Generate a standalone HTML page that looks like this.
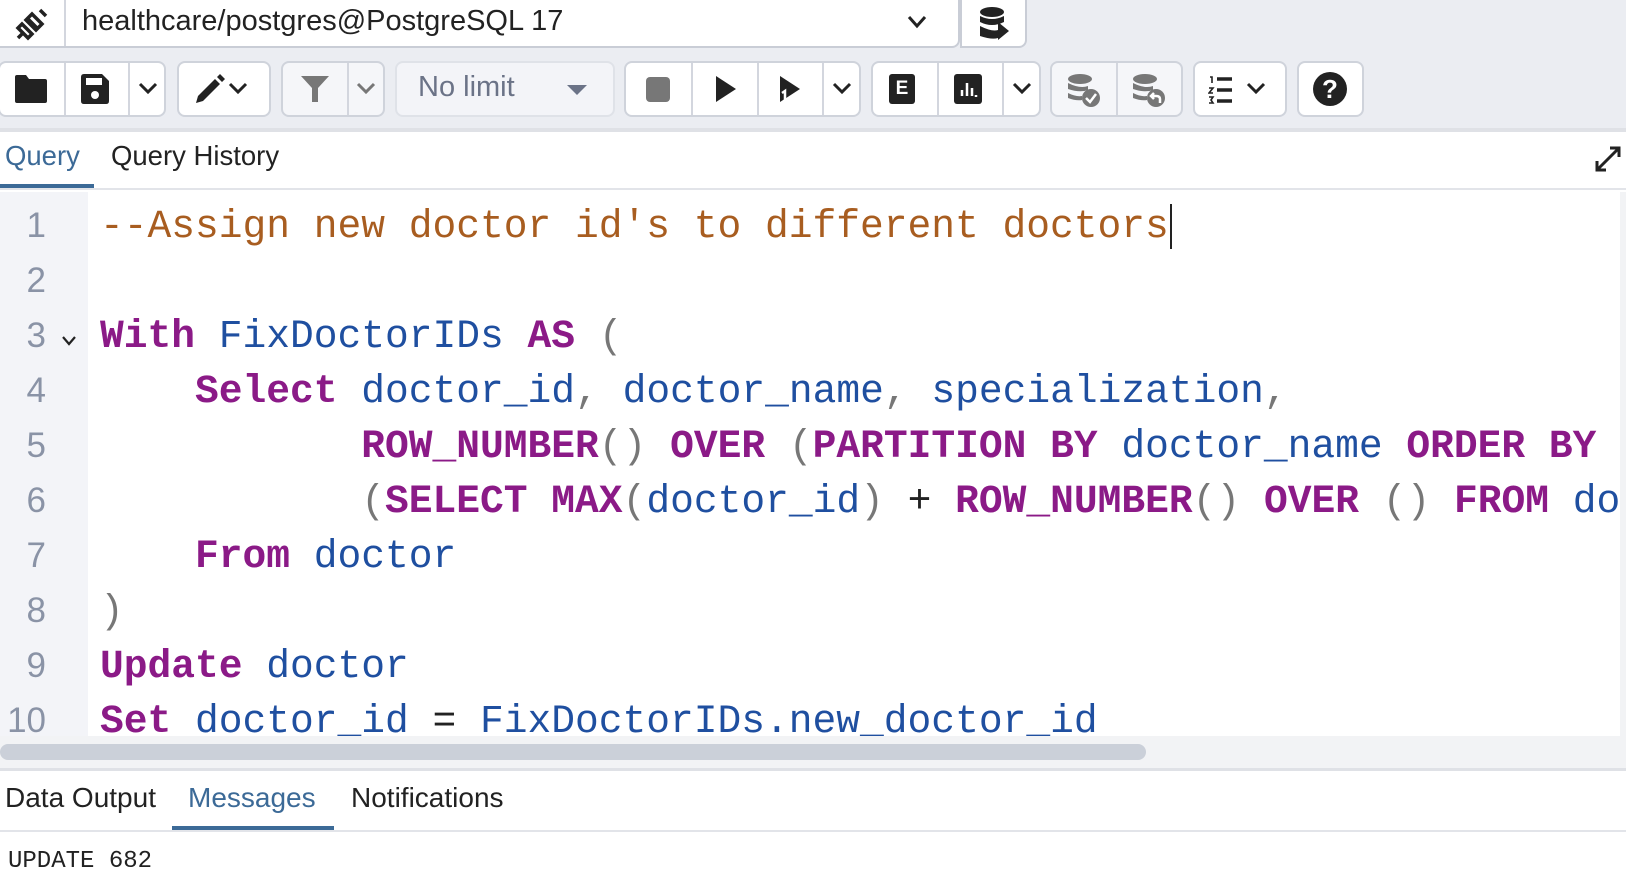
<!DOCTYPE html>
<html><head><meta charset="utf-8"><style>
*{box-sizing:border-box;margin:0;padding:0}
body{width:1626px;height:893px;overflow:hidden;background:#fff;font-family:"Liberation Sans",sans-serif;position:relative}
.abs{position:absolute}
.top{left:0;top:0;width:1626px;height:128px;background:#ebedf2}
.conn{left:-2px;top:-2px;width:962px;height:50px;background:#fff;border:2px solid #c9cdd6;border-radius:0 0 8px 0}
.grp{top:61px;height:56px;background:#fff;border:2px solid #cfd3db;border-radius:8px}
.grp.dis{background:#f5f6f9}
.sep{top:0;width:2px;height:100%;background:#d3d6de}
svg{position:absolute}
.code{left:0;top:192px;width:1620px;height:544px;overflow:hidden;background:#fff}
.gut{left:0;top:0;width:88px;height:544px;background:#f3f4f8}
.ln{position:absolute;left:0;width:46px;text-align:right;font:35px "Liberation Sans",sans-serif;color:#8a93a6}
.cl{position:absolute;left:100px;white-space:pre;font:39.6px "Liberation Mono","DejaVu Sans Mono",monospace;color:#1f4fa0;line-height:55px}
.k{color:#8b1a87;font-weight:bold}
.c{color:#a85d20}
.p{color:#777}
.o{color:#222}
</style></head><body>
<div class="abs top"></div>
<div class="abs conn"></div>
<div class="abs" style="left:64px;top:0;width:2px;height:46px;background:#d3d6de"></div>
<svg style="left:14px;top:6px" width="36" height="36" viewBox="0 0 36 36" fill="none" stroke="#222" stroke-width="3.5"><path d="M4 32 L10 26 M26 4 L32 10 M13 12 L24 23 M18 8 L28 18 L22 24 L12 14 Z M8 18 L18 28 L14 32 L4 22 Z"/></svg>
<div class="abs" style="left:82px;top:5px;font-size:29px;color:#222">healthcare/postgres@PostgreSQL 17</div>
<svg style="left:906px;top:14px" width="22" height="16" viewBox="0 0 22 16"><path d="M3 3 L11 12 L19 3" stroke="#222" stroke-width="3" fill="none"/></svg>
<div class="abs" style="left:960px;top:-2px;width:67px;height:50px;background:#fff;border:2px solid #c9cdd6;border-radius:0 0 8px 0"></div>
<svg style="left:978px;top:6px" width="32" height="36" viewBox="0 0 32 36"><ellipse cx="14" cy="6" rx="12" ry="5" fill="#222"/><path d="M2 10 Q14 16 26 10 V16 Q14 22 2 16Z M2 20 Q14 26 20 24 V32 Q14 34 2 30Z" fill="#222"/><path d="M20 16 L31 25 L20 34Z" fill="#222"/></svg>

<div class="abs grp" style="left:-2px;width:168px"><div class="abs sep" style="left:64px"></div><div class="abs sep" style="left:128px"></div></div>
<svg style="left:14px;top:74px" width="34" height="30" viewBox="0 0 34 30"><path d="M1 3 Q1 1 3 1 H12 L15 5 H31 Q33 5 33 7 V27 Q33 29 31 29 H3 Q1 29 1 27Z" fill="#222"/></svg>
<svg style="left:80px;top:73px" width="30" height="32" viewBox="0 0 30 32"><path d="M1 4 Q1 1 4 1 H22 L29 8 V28 Q29 31 26 31 H4 Q1 31 1 28Z" fill="#222"/><rect x="6" y="5" width="16" height="7" fill="#fff"/><circle cx="15" cy="22" r="4" fill="#fff"/></svg>
<svg style="left:138px;top:82px" width="20" height="14"><path d="M2 2 L10 10 L18 2" stroke="#222" stroke-width="3" fill="none"/></svg>
<div class="abs grp" style="left:177px;width:94px"></div>
<svg style="left:193px;top:72px" width="34" height="34" viewBox="0 0 34 34"><path d="M3 31 L5 24 L22 7 L27 12 L10 29Z M24 5 L27 2 L32 7 L29 10Z" fill="#222"/></svg>
<svg style="left:228px;top:82px" width="20" height="14"><path d="M2 2 L10 10 L18 2" stroke="#222" stroke-width="3" fill="none"/></svg>
<div class="abs grp dis" style="left:281px;width:104px"><div class="abs sep" style="left:64px"></div></div>
<svg style="left:300px;top:74px" width="30" height="30" viewBox="0 0 30 30"><path d="M1 2 H29 L18 14 V28 H12 V14Z" fill="#777"/></svg>
<svg style="left:356px;top:82px" width="20" height="14"><path d="M2 2 L10 10 L18 2" stroke="#777" stroke-width="3" fill="none"/></svg>
<div class="abs grp dis" style="left:395px;width:220px;border-color:#dfe2e8;background:#f3f4f8"></div>
<div class="abs" style="left:418px;top:71px;font-size:29px;color:#6b7387">No limit</div>
<svg style="left:566px;top:84px" width="22" height="12"><path d="M1 1 H21 L11 11Z" fill="#6b7387"/></svg>

<div class="abs grp" style="left:624px;width:237px"><div class="abs sep" style="left:65px"></div><div class="abs sep" style="left:131px"></div><div class="abs sep" style="left:196px"></div></div>
<div class="abs" style="left:646px;top:77px;width:24px;height:25px;background:#777;border-radius:4px"></div>
<svg style="left:714px;top:75px" width="24" height="28"><path d="M2 1 L22 14 L2 27Z" fill="#222"/></svg>
<svg style="left:778px;top:75px" width="26" height="30"><path d="M2 1 L22 14 L2 27Z" fill="#222"/><path d="M7 28 V16 L4 18" stroke="#fff" stroke-width="2.5" fill="none"/></svg>
<svg style="left:832px;top:82px" width="20" height="14"><path d="M2 2 L10 10 L18 2" stroke="#222" stroke-width="3" fill="none"/></svg>

<div class="abs grp" style="left:871px;width:170px"><div class="abs sep" style="left:64px"></div><div class="abs sep" style="left:129px"></div></div>
<div class="abs" style="left:889px;top:74px;width:26px;height:30px;background:#222;border-radius:3px;color:#fff;font:bold 19px 'Liberation Sans';text-align:center;line-height:30px">E</div>
<svg style="left:954px;top:74px" width="28" height="30"><rect width="28" height="30" rx="3" fill="#222"/><path d="M8 22 V16 M13 22 V9 M18 22 V14 M22 23 V21" stroke="#fff" stroke-width="2.5"/></svg>
<svg style="left:1012px;top:82px" width="20" height="14"><path d="M2 2 L10 10 L18 2" stroke="#222" stroke-width="3" fill="none"/></svg>

<div class="abs grp dis" style="left:1050px;width:133px"><div class="abs sep" style="left:64px"></div></div>
<svg style="left:1066px;top:72px" width="36" height="36" viewBox="0 0 36 36"><ellipse cx="14" cy="7" rx="12" ry="5" fill="#777"/><path d="M2 11 Q14 17 22 14 V18 Q14 21 2 17Z M2 21 Q10 25 16 24 V28 Q10 29 2 26Z" fill="#777"/><circle cx="25" cy="26" r="9" fill="#777"/><path d="M20 26 L24 30 L30 22" stroke="#fff" stroke-width="2.5" fill="none"/></svg>
<svg style="left:1131px;top:72px" width="36" height="36" viewBox="0 0 36 36"><ellipse cx="14" cy="7" rx="12" ry="5" fill="#777"/><path d="M2 11 Q14 17 22 14 V18 Q14 21 2 17Z M2 21 Q10 25 16 24 V28 Q10 29 2 26Z" fill="#777"/><circle cx="25" cy="26" r="9" fill="#777"/><path d="M29 31 V27 Q29 24 25 24 H20 M23 21 L20 24 L23 27" stroke="#fff" stroke-width="2.5" fill="none"/></svg>

<div class="abs grp" style="left:1193px;width:94px"></div>
<svg style="left:1208px;top:75px" width="36" height="30" viewBox="0 0 36 30"><path d="M2 2 H4 V8 M1 13 H5 L1 18 H5 M1 22 H5 L3 25 L5 28 H1" stroke="#222" stroke-width="1.6" fill="none"/><path d="M9 4 H24 M9 15 H24 M9 26 H24" stroke="#222" stroke-width="3.5"/></svg>
<svg style="left:1246px;top:82px" width="20" height="14"><path d="M2 2 L10 10 L18 2" stroke="#222" stroke-width="3" fill="none"/></svg>
<div class="abs grp" style="left:1297px;width:67px"></div>
<div class="abs" style="left:1313px;top:72px;width:34px;height:34px;border-radius:50%;background:#222;color:#fff;font:bold 26px 'Liberation Sans';text-align:center;line-height:34px">?</div>

<div class="abs" style="left:0;top:128px;width:1626px;height:4px;background:#dfe1e6"></div>
<div class="abs" style="left:5px;top:140px;font-size:27.5px;color:#3c6a97">Query</div>
<div class="abs" style="left:111px;top:140px;font-size:27.5px;color:#222">Query History</div>
<div class="abs" style="left:0;top:184px;width:94px;height:4px;background:#3c6a97"></div>
<div class="abs" style="left:0;top:188px;width:1626px;height:2px;background:#e2e4e9"></div>
<svg style="left:1594px;top:145px" width="28" height="28" viewBox="0 0 28 28"><path d="M3 25 L25 3 M16 3 H25 V12 M3 16 V25 H12" stroke="#222" stroke-width="3" fill="none"/></svg>

<div class="abs code">
<div class="abs gut"></div>
<div class="ln" style="top:14px">1</div>
<div class="ln" style="top:69px">2</div>
<div class="ln" style="top:124px">3</div>
<div class="ln" style="top:179px">4</div>
<div class="ln" style="top:234px">5</div>
<div class="ln" style="top:289px">6</div>
<div class="ln" style="top:344px">7</div>
<div class="ln" style="top:399px">8</div>
<div class="ln" style="top:454px">9</div>
<div class="ln" style="top:509px">10</div>
<svg style="left:62px;top:144px" width="14" height="10"><path d="M1 1 L7 8 L13 1" stroke="#222" stroke-width="2.2" fill="none"/></svg>
<div class="cl" style="top:7px"><span class="c">--Assign new doctor id's to different doctors</span><span class="o" style="border-left:2px solid #222;margin-left:1px"></span></div>
<div class="cl" style="top:117px"><span class="k">With</span> FixDoctorIDs <span class="k">AS</span> <span class="p">(</span></div>
<div class="cl" style="top:172px">    <span class="k">Select</span> doctor_id<span class="p">,</span> doctor_name<span class="p">,</span> specialization<span class="p">,</span></div>
<div class="cl" style="top:227px">           <span class="k">ROW_NUMBER</span><span class="p">()</span> <span class="k">OVER</span> <span class="p">(</span><span class="k">PARTITION BY</span> doctor_name <span class="k">ORDER BY</span> doctor_id<span class="p">)</span></div>
<div class="cl" style="top:282px">           <span class="p">(</span><span class="k">SELECT MAX</span><span class="p">(</span>doctor_id<span class="p">)</span> <span class="o">+</span> <span class="k">ROW_NUMBER</span><span class="p">()</span> <span class="k">OVER</span> <span class="p">()</span> <span class="k">FROM</span> doctor<span class="p">)</span></div>
<div class="cl" style="top:337px">    <span class="k">From</span> doctor</div>
<div class="cl" style="top:392px"><span class="p">)</span></div>
<div class="cl" style="top:447px"><span class="k">Update</span> doctor</div>
<div class="cl" style="top:502px"><span class="k">Set</span> doctor_id <span class="o">=</span> FixDoctorIDs.new_doctor_id</div>
</div>
<div class="abs" style="left:1620px;top:192px;width:6px;height:544px;background:#f2f3f5"></div>
<div class="abs" style="left:0;top:736px;width:1626px;height:32px;background:#f2f3f5"></div>
<div class="abs" style="left:0;top:744px;width:1146px;height:16px;background:#cbd0d9;border-radius:8px"></div>
<div class="abs" style="left:0;top:768px;width:1626px;height:3px;background:#dfe1e6"></div>
<div class="abs" style="left:5px;top:782px;font-size:28px;color:#222">Data Output</div>
<div class="abs" style="left:188px;top:782px;font-size:28px;color:#3c6a97">Messages</div>
<div class="abs" style="left:351px;top:782px;font-size:28px;color:#222">Notifications</div>
<div class="abs" style="left:172px;top:826px;width:162px;height:4px;background:#3c6a97"></div>
<div class="abs" style="left:0;top:830px;width:1626px;height:2px;background:#e2e4e9"></div>
<div class="abs" style="left:8px;top:848px;font:24px 'Liberation Mono',monospace;color:#222">UPDATE 682</div>
</body></html>
